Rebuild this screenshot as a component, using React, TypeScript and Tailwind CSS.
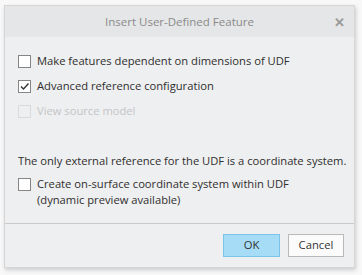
import React from "react";

function Box({ checked, disabled }: { checked?: boolean; disabled?: boolean }) {
  return (
    <div
      className={
        "w-[13px] h-[13px] shrink-0 border flex items-center justify-center " +
        (disabled ? "border-[#d9dadb] bg-[#eeeff0]" : "border-[#858585] bg-white")
      }
    >
      {checked && (
        <svg width="11" height="11" viewBox="0 0 11 11">
          <path d="M2 5.5 L4.5 8 L9.5 2.5" fill="none" stroke="#333" strokeWidth="1.4" />
        </svg>
      )}
    </div>
  );
}

export default function App() {
  return (
    <div
      className="w-[362px] h-[275px] bg-[#f8f8f8] pt-[5px] pl-[4px]"
      style={{ fontFamily: '"Open Sans", "Noto Sans", sans-serif' }}
    >
      <div className="w-[351px] h-[263px] border border-[#d6d6d6] bg-[#eeeff0] shadow-[1px_2px_4px_rgba(0,0,0,0.18)] flex flex-col">
        <div className="h-[31px] bg-[#e5e6e7] relative flex items-center justify-center text-[11.5px] text-[#8a8a8a]">
          Insert User-Defined Feature
          <span className="absolute right-[9px] top-[7px] text-[13px] font-bold text-[#9a9a9a]">✕</span>
        </div>
        <div className="flex-1 flex flex-col pl-[13px] pt-[12px] text-[11.2px] text-[#2e2e2e]">
          <div className="h-[25px] flex items-center gap-[6px]">
            <Box />
            <span>Make features dependent on dimensions of UDF</span>
          </div>
          <div className="h-[25px] flex items-center gap-[6px]">
            <Box checked />
            <span>Advanced reference configuration</span>
          </div>
          <div className="h-[25px] flex items-center gap-[6px] text-[#c4c5c6]">
            <Box disabled />
            <span>View source model</span>
          </div>
          <div className="mt-[29px] leading-[16px] whitespace-nowrap">
            The only external reference for the UDF is a coordinate system.
          </div>
          <div className="mt-[7px] flex items-start gap-[6px] leading-[16px]">
            <div className="mt-[2px]">
              <Box />
            </div>
            <span>
              Create on-surface coordinate system within UDF
              <br />
              (dynamic preview available)
            </span>
          </div>
        </div>
        <div className="h-[44px] border-t border-[#c9c9c9] flex items-start justify-end gap-[8px] pr-[10px] pt-[10px] text-[11.25px] text-[#333]">
          <button className="w-[57px] h-[23px] bg-[#a7dcf7] border border-[#7cc3ea] flex items-center justify-center">
            OK
          </button>
          <button className="w-[56px] h-[23px] bg-[#fbfbfb] border border-[#b9b9b9] flex items-center justify-center">
            Cancel
          </button>
        </div>
      </div>
    </div>
  );
}
